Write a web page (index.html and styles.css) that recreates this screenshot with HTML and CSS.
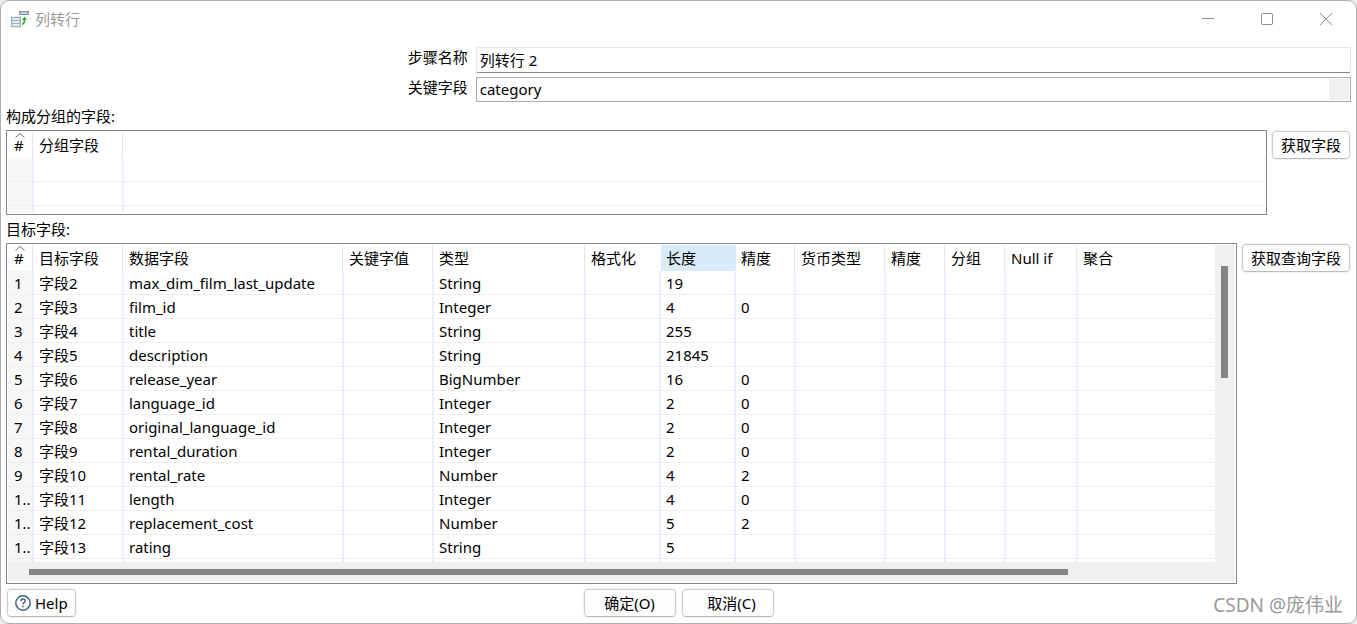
FILE: index.html
```html
<!DOCTYPE html>
<html lang="zh-CN">
<head>
<meta charset="utf-8">
<title>列转行</title>
<link rel="stylesheet" href="styles.css">
</head>
<body>
<form class="window">
  <header class="titlebar">
    <svg class="app-icon" width="20" height="18" viewBox="0 0 20 18" fill="none">
      <path d="M9.700 1.700h8.600v2.600h-8.600z" stroke="#8299ae" stroke-width="1.400"/>
      <path d="M1.600 7.500h8.800v9h-8.800zM1 10.500h10M1 13.500h10" stroke="#9db0c0" stroke-width="1.300"/>
      <path d="M12 14.300q2.500-.3 2.500-5" stroke="#2db32d" stroke-width="1.600"/>
      <path d="M12 10l2.500-3.500 2.500 3.500z" fill="#2db32d"/>
    </svg>
    <h1 class="title">列转行</h1>
    <div class="window-controls">
      <button type="button" class="control" aria-label="最小化"><svg width="14" height="14" viewBox="0 0 14 14"><path d="M1 6.500h12"/></svg></button>
      <button type="button" class="control" aria-label="最大化"><svg width="14" height="14" viewBox="0 0 14 14"><rect x="1.500" y="1.500" width="11" height="11" rx="1"/></svg></button>
      <button type="button" class="control" aria-label="关闭"><svg width="14" height="14" viewBox="0 0 14 14"><path d="M1 1l12 12M13 1L1 13"/></svg></button>
    </div>
  </header>

  <div class="fields">
    <label for="step">步骤名称</label>
    <input id="step" class="text-input" type="text" value="列转行 2">
    <label for="key">关键字段</label>
    <div class="combo">
      <input id="key" class="combo-input" type="text" value="category">
      <button type="button" class="combo-button" aria-label="选择关键字段"></button>
    </div>
  </div>

  <h2 class="section-label" id="group-label">构成分组的字段:</h2>
  <div class="section section-group">
    <div class="panel">
      <div class="viewport">
        <table class="grid" aria-labelledby="group-label">
          <colgroup><col class="w26"><col class="w90"><col></colgroup>
          <thead><tr><th class="index"><svg class="sort" width="10" height="5" viewBox="0 0 10 5"><path d="M.5 4.500L5 .5l4.500 4"/></svg>#</th><th>分组字段</th><th></th></tr></thead>
          <tbody>
            <tr><td></td><td></td><td></td></tr>
            <tr><td></td><td></td><td></td></tr>
            <tr><td></td><td></td><td></td></tr>
          </tbody>
        </table>
      </div>
    </div>
    <button type="button" class="button">获取字段</button>
  </div>

  <h2 class="section-label" id="target-label">目标字段:</h2>
  <div class="section section-target">
    <div class="panel scrollable">
      <div class="viewport">
        <table class="grid" aria-labelledby="target-label">
          <colgroup><col class="w26"><col class="w90"><col class="w220"><col class="w90"><col class="w152"><col class="w75"><col class="w75"><col class="w60"><col class="w90"><col class="w60"><col class="w60"><col class="w72"><col></colgroup>
          <thead><tr><th class="index"><svg class="sort" width="10" height="5" viewBox="0 0 10 5"><path d="M.5 4.500L5 .5l4.500 4"/></svg>#</th><th>目标字段</th><th>数据字段</th><th>关键字值</th><th>类型</th><th class="before-active">格式化</th><th class="active">长度</th><th>精度</th><th>货币类型</th><th>精度</th><th>分组</th><th>Null if</th><th>聚合</th></tr></thead>
          <tbody>
            <tr><td>1</td><td>字段2</td><td>max_dim_film_last_update</td><td></td><td>String</td><td></td><td>19</td><td></td><td></td><td></td><td></td><td></td><td></td></tr>
            <tr><td>2</td><td>字段3</td><td>film_id</td><td></td><td>Integer</td><td></td><td>4</td><td>0</td><td></td><td></td><td></td><td></td><td></td></tr>
            <tr><td>3</td><td>字段4</td><td>title</td><td></td><td>String</td><td></td><td>255</td><td></td><td></td><td></td><td></td><td></td><td></td></tr>
            <tr><td>4</td><td>字段5</td><td>description</td><td></td><td>String</td><td></td><td>21845</td><td></td><td></td><td></td><td></td><td></td><td></td></tr>
            <tr><td>5</td><td>字段6</td><td>release_year</td><td></td><td>BigNumber</td><td></td><td>16</td><td>0</td><td></td><td></td><td></td><td></td><td></td></tr>
            <tr><td>6</td><td>字段7</td><td>language_id</td><td></td><td>Integer</td><td></td><td>2</td><td>0</td><td></td><td></td><td></td><td></td><td></td></tr>
            <tr><td>7</td><td>字段8</td><td>original_language_id</td><td></td><td>Integer</td><td></td><td>2</td><td>0</td><td></td><td></td><td></td><td></td><td></td></tr>
            <tr><td>8</td><td>字段9</td><td>rental_duration</td><td></td><td>Integer</td><td></td><td>2</td><td>0</td><td></td><td></td><td></td><td></td><td></td></tr>
            <tr><td>9</td><td>字段10</td><td>rental_rate</td><td></td><td>Number</td><td></td><td>4</td><td>2</td><td></td><td></td><td></td><td></td><td></td></tr>
            <tr><td>1..</td><td>字段11</td><td>length</td><td></td><td>Integer</td><td></td><td>4</td><td>0</td><td></td><td></td><td></td><td></td><td></td></tr>
            <tr><td>1..</td><td>字段12</td><td>replacement_cost</td><td></td><td>Number</td><td></td><td>5</td><td>2</td><td></td><td></td><td></td><td></td><td></td></tr>
            <tr><td>1..</td><td>字段13</td><td>rating</td><td></td><td>String</td><td></td><td>5</td><td></td><td></td><td></td><td></td><td></td><td></td></tr>
            <tr><td></td><td></td><td></td><td></td><td></td><td></td><td></td><td></td><td></td><td></td><td></td><td></td><td></td></tr>
          </tbody>
        </table>
      </div>
      <div class="bar-v"><div class="thumb-v"></div></div>
      <div class="bar-h"><div class="thumb-h"></div></div>
    </div>
    <button type="button" class="button">获取查询字段</button>
  </div>

  <footer class="footer">
    <div class="footer-side">
      <button type="button" class="button help"><svg width="16" height="16" viewBox="0 0 16 16" fill="none" stroke="#3d6480"><circle cx="8" cy="8" r="7.200" stroke-width="1.500"/><path d="M5.800 6.200q0-2.200 2.200-2.200t2.200 2q0 1-1.200 1.700-1 .6-1 1.700" stroke-width="1.400"/><path d="M8 10.800v1.500" stroke-width="1.500"/></svg>Help</button>
    </div>
    <div class="actions">
      <button type="submit" class="button action">确定(O)</button>
      <button type="button" class="button action cancel">取消(C)</button>
    </div>
    <div class="footer-side watermark"><span>CSDN @庞伟业</span></div>
  </footer>
</form>
</body>
</html>
```

FILE: styles.css
```css
* { box-sizing: border-box; }

body {
  margin: 0;
  background: #ececec;
  color: #000;
  font: 15px/20px "Noto Sans", "Noto Sans CJK SC", sans-serif;
}

.window {
  display: flex;
  flex-direction: column;
  height: 100vh;
  min-height: 420px;
  padding: 0 5px;
  border: 1px solid #b0b0b0;
  border-radius: 9px;
  background: #fff;
}

button, input { font: inherit; color: inherit; }

.titlebar {
  display: flex;
  align-items: center;
  height: 36px;
  padding-left: 4px;
}

.title {
  flex: 1;
  margin: 0 0 0 5px;
  color: #999;
  font-size: 15px;
  font-weight: 400;
}

.window-controls {
  display: flex;
  gap: 13px;
  padding-right: 2px;
}

.control {
  display: grid;
  place-items: center;
  width: 46px;
  height: 32px;
  padding: 0;
  border: 0;
  background: none;
}

.control svg { fill: none; stroke: #8c8c8c; }

.fields {
  display: grid;
  grid-template-columns: 35fr 65fr;
  row-gap: 4px;
  padding-top: 10px;
}

.fields label {
  padding-right: 9px;
  text-align: right;
}

.text-input {
  height: 26px;
  margin-left: -1px;
  padding: 0 3px 1px;
  border: 1px solid #e6e6e6;
  border-bottom-color: #868686;
  border-radius: 2px;
  background: #fff;
  min-width: 0;
}

.combo {
  display: flex;
  height: 25px;
  margin-left: -1px;
  padding: 1px;
  border: 1px solid #abadb3;
}

.combo-input {
  flex: 1;
  min-width: 0;
  padding: 0 2px 2px;
  border: 0;
}

.combo-button {
  width: 20px;
  border: 0;
  background: #f0f0f0;
}

.section-label {
  margin: 0;
  padding: 4px 0;
  font-size: 15px;
  font-weight: 400;
}

.section {
  display: flex;
  align-items: flex-start;
  gap: 4px;
}

.section-group { height: 85px; }
.section-target { flex: 1; min-height: 0; }

.panel {
  flex: 1;
  height: 100%;
  min-width: 0;
  padding: 1px;
  border: 1px solid #828790;
}

.viewport {
  height: 100%;
  min-width: 0;
  min-height: 0;
  overflow: hidden;
}

.scrollable {
  display: grid;
  grid-template: minmax(0, 1fr) 20px / minmax(0, 1fr) 20px;
}

.bar-v { padding: 21px 7px 0 6px; background: #f0f0f0; }
.thumb-v { height: 38%; background: #858585; }
.bar-h { grid-column: 1 / -1; padding: 7px 20px 7px 21px; background: #f0f0f0; }
.thumb-h { width: 1039px; max-width: 88%; height: 6px; background: #858585; }

.grid {
  width: 100%;
  table-layout: fixed;
  border-collapse: separate;
  border-spacing: 0;
}

.grid th {
  height: 26px;
  padding: 0 0 0 5px;
  background: linear-gradient(#e5e5e5, #e5e5e5) right 1px top / 1px 100% no-repeat;
  font-weight: 400;
  text-align: left;
  white-space: nowrap;
}

.grid th.before-active { background: none; }
.grid th.active { background: #d9ebf9; }

.grid td {
  height: 24px;
  padding: 0 0 0 5px;
  border-right: 2px solid #eaf1fd;
  border-bottom: 1px solid #efefef;
  white-space: nowrap;
}

.grid th:last-child { background: none; }
.grid td:last-child { border-right: 0; }
.grid td:first-child { padding-left: 6px; background: #f7f7f7; }
.grid th.index { position: relative; padding-left: 6px; }

.sort {
  position: absolute;
  top: 1px;
  left: 7px;
  fill: none;
  stroke: #666;
}

.w26 { width: 26px; }
.w60 { width: 60px; }
.w72 { width: 72px; }
.w75 { width: 75px; }
.w90 { width: 90px; }
.w152 { width: 152px; }
.w220 { width: 220px; }

.button {
  display: flex;
  align-items: center;
  justify-content: center;
  gap: 4px;
  height: 28px;
  padding: 0 8px;
  border: 1px solid #d0d0d0;
  border-bottom-color: #bcbcbc;
  border-radius: 4px;
  outline: 1px solid #f0f0f0;
  background: #fdfdfd;
  white-space: nowrap;
}

.section .button { margin: 1px 1px 0; }

.footer {
  display: flex;
  align-items: center;
  height: 39px;
  padding-bottom: 1px;
}

.footer-side { flex: 1; }
.help { margin-left: 1px; padding: 0 7px; }
.actions { display: flex; gap: 6px; }
.action { width: 92px; }
.cancel { padding-left: 16px; }

.watermark {
  color: #999;
  font-size: 19px;
  text-align: right;
}

.watermark span {
  display: block;
  padding: 4px 8px 0 0;
}
```
